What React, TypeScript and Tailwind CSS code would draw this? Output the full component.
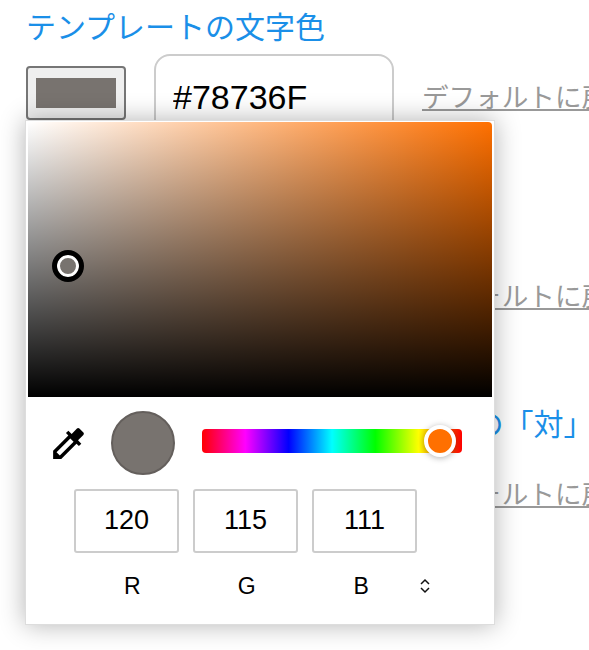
function UnfoldIcon() {
  return (
    <svg className="block" width="12" height="16" viewBox="0 0 12 16" fill="none" stroke="#111" strokeWidth="1.5">
      <path d="M2 6l4-4 4 4" />
      <path d="M2 10l4 4 4-4" />
    </svg>
  );
}

function ColorRow({ title }: { title: string }) {
  return (
    <section className="h-[198.5px] whitespace-nowrap">
      <h2 className="h-[54px] pl-[26px] pt-[8px] text-[30px] leading-[40px] font-normal text-[#1a8fe8]">{title}</h2>
      <div className="flex items-start pl-[26px]">
        <button className="mt-[12px] flex h-[54px] w-[100px] shrink-0 items-center justify-center rounded-[4px] border-2 border-[#767676] bg-[#efefef]">
          <span className="block h-[30px] w-[80px] bg-[#78736f]" />
        </button>
        <input
          readOnly
          value="#78736F"
          className="ml-[28px] h-[86px] w-[240px] shrink-0 rounded-[16px] border-2 border-[#ccc] px-[17px] text-[34px] text-black outline-none"
        />
        <a className="mt-[25px] ml-[28px] text-[26.6px] leading-[38px] text-[#999] underline">デフォルトに戻す</a>
      </div>
    </section>
  );
}

function RgbField({ value }: { value: number }) {
  return (
    <div className="flex h-[64px] w-[105px] items-center justify-center rounded-[3px] border-2 border-[#ccc] pb-[2px] text-[27px] text-black">
      {value}
    </div>
  );
}

export default function App() {
  return (
    <div className="relative h-[650px] w-full overflow-hidden bg-white font-['Liberation_Sans','Noto_Sans_CJK_JP',sans-serif]">
      <ColorRow title="テンプレートの文字色" />
      <ColorRow title="テンプレートの背景色" />
      <ColorRow title="テンプレートのアクセントカラーの「対」" />

      {/* picker popover */}
      <div className="absolute top-[120px] left-[25px] h-[505px] w-[470px] border border-[#ddd] bg-white px-[2px] pt-[1px] shadow-[0_0_24px_rgba(0,0,0,0.3)]">
        <div className="relative h-[275px] w-[464px] overflow-hidden rounded-t-[4px] bg-[linear-gradient(to_top,#000,transparent),linear-gradient(to_right,#fff,#ff7000)]">
          <span className="absolute top-[128px] left-[24px] h-[32px] w-[32px] rounded-full border-[5px] border-black bg-[#78736f] shadow-[inset_0_0_0_3px_#fff]" />
        </div>

        <div className="mt-[14px] flex h-[64px] items-center">
          <svg className="ml-[20px]" width="41" height="41" viewBox="0 0 24 24" fill="#000">
            <path d="M20.71 5.63l-2.34-2.34c-.39-.39-1.02-.39-1.41 0l-3.12 3.12-1.93-1.91-1.41 1.41 1.42 1.42L3 16.25V21h4.75l8.92-8.92 1.42 1.42 1.41-1.41-1.92-1.92 3.12-3.12c.4-.4.4-1.03.01-1.42zM6.92 19L5 17.08l8.06-8.06 1.92 1.92L6.92 19z" />
          </svg>
          <span className="ml-[22px] h-[64px] w-[64px] rounded-full border-2 border-[#645f5c] bg-[#78736f]" />
          <div className="relative mt-[-4px] ml-[27px] h-[24px] w-[260px] rounded-[4px] bg-[linear-gradient(to_right,#f00,#f0f_16.67%,#00f_33.33%,#0ff_50%,#0f0_66.67%,#ff0_83.33%,#f00)]">
            <span className="absolute top-[-4px] left-[222px] h-[32px] w-[32px] rounded-full border-4 border-white bg-[#ff7000] shadow-[0_1px_6px_rgba(0,0,0,0.3)]" />
          </div>
        </div>

        <div className="mt-[14px] flex items-start gap-[14px] pl-[46px]">
          <RgbField value={120} />
          <RgbField value={115} />
          <RgbField value={111} />
        </div>

        <div className="mt-[19px] flex items-center pl-[47px] text-center text-[23px] leading-[28px] text-black">
          <span className="w-[114.5px]">R</span>
          <span className="w-[114.5px]">G</span>
          <span className="w-[114.5px]">B</span>
          <UnfoldIcon />
        </div>
      </div>
    </div>
  );
}
